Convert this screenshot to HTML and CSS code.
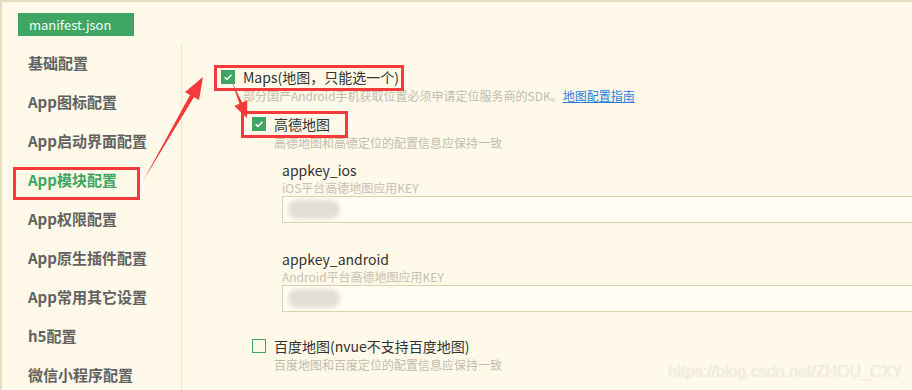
FILE: index.html
```html
<!DOCTYPE html>
<html lang="zh-CN">
<head>
<meta charset="utf-8">
<title>manifest.json</title>
<link rel="stylesheet" href="styles.css">
</head>
<body>
<div class="app">
  <div class="header">
    <div class="tab">manifest.json</div>
  </div>
  <div class="main">
    <ul class="sidebar">
      <li class="nav">基础配置</li>
      <li class="nav">App图标配置</li>
      <li class="nav">App启动界面配置</li>
      <li class="nav active">App模块配置</li>
      <li class="nav">App权限配置</li>
      <li class="nav">App原生插件配置</li>
      <li class="nav">App常用其它设置</li>
      <li class="nav">h5配置</li>
      <li class="nav">微信小程序配置</li>
    </ul>
    <div class="content">
      <div class="opt opt-maps">
        <span class="cb checked"><svg viewBox="0 0 14 14" width="14" height="14"><path d="M3.6 7.2 L6 9.4 L10.4 4.8" fill="none" stroke="#fff" stroke-width="1.5"/></svg></span>
        <span class="opt-label">Maps(地图，只能选一个)</span>
      </div>
      <div class="desc desc-maps">部分国产Android手机获取位置必须申请定位服务商的SDK。<a class="link" href="#">地图配置指南</a></div>

      <div class="opt opt-sub opt-amap">
        <span class="cb checked"><svg viewBox="0 0 14 14" width="14" height="14"><path d="M3.6 7.2 L6 9.4 L10.4 4.8" fill="none" stroke="#fff" stroke-width="1.5"/></svg></span>
        <span class="opt-label">高德地图</span>
      </div>
      <div class="desc desc-sub">高德地图和高德定位的配置信息应保持一致</div>

      <div class="field field-first">
        <div class="field-label">appkey_ios</div>
        <div class="field-desc">iOS平台高德地图应用KEY</div>
        <div class="input"><span class="blur"></span></div>
      </div>

      <div class="field">
        <div class="field-label">appkey_android</div>
        <div class="field-desc">Android平台高德地图应用KEY</div>
        <div class="input"><span class="blur"></span></div>
      </div>

      <div class="opt opt-sub opt-baidu">
        <span class="cb"></span>
        <span class="opt-label">百度地图(nvue不支持百度地图)</span>
      </div>
      <div class="desc desc-sub">百度地图和百度定位的配置信息应保持一致</div>
    </div>
  </div>

  <div class="mark mark-maps"></div>
  <div class="mark mark-amap"></div>
  <div class="mark mark-nav"></div>
  <svg class="arrows" width="912" height="390" viewBox="0 0 912 390">
    <polygon points="143,181 190,95 185,92 203,77 199,100 194,97" fill="#f53a3a"/>
    <polygon points="232,82 239.4,103.8 234.3,105.9 247,118 247.3,100.5 242.2,102.6" fill="#f53a3a"/>
  </svg>
  <div class="watermark">https://blog.csdn.net/ZHOU_CXY</div>
</div>
</body>
</html>
```

FILE: styles.css
```css
* { box-sizing: border-box; }
html, body { margin: 0; padding: 0; }
body {
  width: 912px;
  height: 390px;
  overflow: hidden;
  background: #fef9e8;
  font-family: "Noto Sans CJK SC", "Noto Sans", sans-serif;
  color: #333;
}
.app {
  position: relative;
  width: 912px;
  height: 390px;
  overflow: hidden;
  border-top: 2px solid #e6dcbf;
  border-left: 2px solid #e6dcbf;
  background: #fef9e8;
}
.header {
  height: 43px;
  padding: 9px 0 0 16px;
}
.tab {
  display: inline-block;
  width: 116px;
  height: 23px;
  line-height: 23px;
  padding-left: 11px;
  background: #3fa562;
  color: #f4fff6;
  font-size: 13px;
}
.main {
  display: flex;
  height: 345px;
}
.sidebar {
  list-style: none;
  margin: 0;
  padding: 0;
  width: 180px;
  flex: none;
  border-right: 1px solid #ede4c9;
}
.nav {
  height: 39px;
  line-height: 35px;
  padding: 0 0 4px 26px;
  font-size: 15px;
  font-weight: bold;
  color: #626262;
  white-space: nowrap;
}
.nav.active { color: #3fa562; }
.content {
  flex: 1;
  padding-left: 39px;
  min-width: 0;
}
.opt {
  display: flex;
  align-items: center;
  height: 20px;
  font-size: 14px;
  white-space: nowrap;
}
.opt-maps { margin-top: 22px; }
.opt-amap { margin-top: 9px; }
.opt-baidu { margin-top: 24px; }
.opt-sub { padding-left: 31px; }
.cb {
  width: 14px;
  height: 14px;
  flex: none;
  border: 1px solid #3fa562;
  margin-right: 8px;
  display: flex;
}
.cb svg { display: block; margin: -1px; }
.cb.checked { background: #3fa562; }
.opt-label { color: #333; line-height: 20px; }
.desc {
  font-size: 12px;
  line-height: 17px;
  color: #c2bcaf;
  white-space: nowrap;
}
.desc-maps { padding-left: 22px; line-height: 18px; }
.desc-sub { padding-left: 53px; }
.link { color: #2b7fd9; text-decoration: underline; }
.field {
  padding-left: 61px;
  margin-top: 26px;
}
.field-first { margin-top: 9px; }
.field-label {
  font-size: 14px;
  line-height: 20px;
  color: #333;
}
.field-desc {
  font-size: 12px;
  line-height: 16px;
  color: #c7c1b4;
}
.input {
  width: 720px;
  height: 27px;
  border: 1px solid #ded2ab;
  background: #fffdf4;
  padding: 3px 0 0 5px;
}
.blur {
  display: block;
  width: 52px;
  height: 19px;
  border-radius: 10px;
  background: #e2ded4;
  filter: blur(2px);
}
.mark {
  position: absolute;
  border: 3px solid #f53a3a;
}
.mark-maps { left: 212px; top: 63px; width: 190px; height: 26px; }
.mark-amap { left: 239px; top: 109px; width: 107px; height: 27px; }
.mark-nav { left: 11px; top: 165px; width: 127px; height: 33px; }
.arrows {
  position: absolute;
  left: -2px;
  top: -2px;
}
.watermark {
  position: absolute;
  left: 666px;
  top: 360px;
  font-family: "Liberation Sans", Arial, sans-serif;
  font-size: 16px;
  line-height: 20px;
  color: #f3f0e8;
  text-shadow: 0 0 1px #d8d4ca;
  white-space: nowrap;
}
```
